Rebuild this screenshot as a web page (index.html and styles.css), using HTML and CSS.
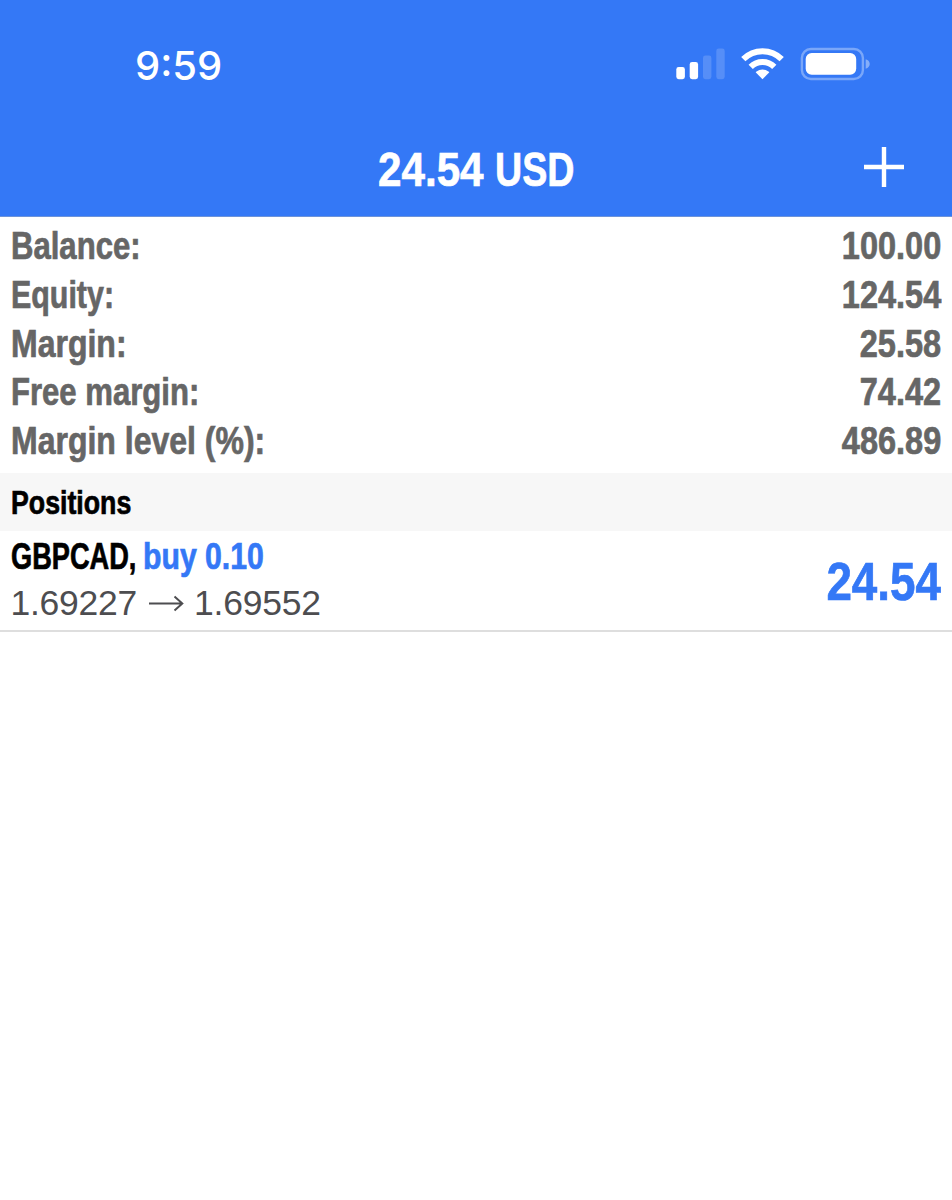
FILE: index.html
```
<!DOCTYPE html>
<html lang="en">
<head>
  <meta charset="UTF-8" />
  <meta name="viewport" content="width=device-width, initial-scale=1.0" />
  <title>24.54 USD</title>
  <link rel="stylesheet" href="styles.css">
</head>
<body>

<header>
  <div class="status-bar">
    <span class="time">9:59</span>
    <svg class="status-icons" width="196" height="34" viewBox="0 0 196 34" fill="#fff">
      <!-- signal -->
      <rect x="2.3" y="20" width="8.6" height="12.2" rx="2.4" />
      <rect x="15.7" y="15" width="8.4" height="17.2" rx="2.4" />
      <rect x="29" y="8.5" width="8.4" height="23.7" rx="2.4" opacity=".17" />
      <rect x="42.3" y="1.5" width="8.4" height="30.7" rx="2.4" opacity=".17" />
      <!-- wifi -->
      <g fill="none" stroke="#fff">
        <path d="M69.3 12.2A27.2 27.2 0 0 1 107.7 12.2" stroke-width="6" />
        <path d="M76.7 19.8A16.7 16.7 0 0 1 100.3 19.8" stroke-width="6" />
      </g>
      <path d="M88.5 32.3L81.9 25.6Q81.6 25.1 82.1 24.7Q88.5 20.1 94.9 24.7Q95.4 25.1 95.1 25.6Z" />
      <!-- battery -->
      <rect x="127.9" y="2" width="61" height="30" rx="9" fill="none" stroke="#fff" stroke-width="2.4" opacity=".35" />
      <rect x="131.7" y="6" width="50.5" height="21.8" rx="6" />
      <path d="M191.7 12.3Q195.7 13.6 195.7 17T191.7 21.7Z" opacity=".4" />
    </svg>
  </div>
  <div class="nav-bar">
    <h1><span class="amount">24.54</span> <span class="currency">USD</span></h1>
    <svg class="add" width="40" height="40" viewBox="0 0 40 40">
      <path d="M20 0V40M0 20H40" stroke="#fff" stroke-width="4.4" />
    </svg>
  </div>
</header>

<div class="summary">
  <div class="row"><span class="label">Balance:</span><span class="value">100.00</span></div>
  <div class="row"><span class="label equity">Equity:</span><span class="value">124.54</span></div>
  <div class="row"><span class="label margin">Margin:</span><span class="value">25.58</span></div>
  <div class="row"><span class="label">Free margin:</span><span class="value">74.42</span></div>
  <div class="row"><span class="label margin">Margin level (%):</span><span class="value">486.89</span></div>
</div>

<div class="section"><h2>Positions</h2></div>

<div class="position">
  <div class="details">
    <div class="order">
      <span class="symbol">GBPCAD,</span>
      <span class="side">buy 0.10</span>
    </div>
    <div class="prices">
      <span class="price">1.69227</span>
      <svg class="arrow" width="35" height="17" viewBox="0 0 35 17" fill="none" stroke="#4d4d50" stroke-width="2">
        <path d="M0 8.5H33M25.5 1.5L33.3 8.5L25.5 15.5" />
      </svg>
      <span class="price">1.69552</span>
    </div>
  </div>
  <span class="profit">24.54</span>
</div>

</body>
</html>
```

FILE: styles.css
```
* {
  box-sizing: border-box;
}

body {
  margin: 0;
  background: #fff;
  font-family: "Liberation Sans", Arial, sans-serif;
  color: #000;
}

header {
  height: 217px;
  background: #3478f6;
  color: #fff;
  border-bottom: 1px solid #6c93da;
}

.status-bar {
  display: flex;
  justify-content: space-between;
  padding: 42px 82px 0 135px;
  height: 119px;
}

.time {
  font-family: Inter, sans-serif;
  font-size: 40px;
  font-weight: 500;
  line-height: 48px;
}

.status-icons {
  margin-top: 5px;
}

.nav-bar {
  display: grid;
  grid-template-columns: 1fr auto 1fr;
  align-items: center;
  height: 96px;
  padding: 0 48px;
}

.nav-bar h1 {
  display: flex;
  justify-content: space-between;
  grid-column: 2;
  width: 196px;
  margin: 4px 0 0;
  font-size: 48.5px;
  line-height: 58px;
}

.add {
  justify-self: end;
}

/* condensed bold text */
.label, .value, .section h2, .symbol, .side, .profit, .amount, .currency {
  display: inline-block;
  font-weight: bold;
  white-space: nowrap;
  transform-origin: left;
  -webkit-text-stroke: .7px currentColor;
}

.amount {
  width: 104px;
  transform: scaleX(.87);
}

.currency {
  width: 79px;
  transform: scaleX(.775);
}

.summary {
  height: 256px;
  padding: 5px 11px 0 10.5px;
  color: #666;
}

.row {
  display: flex;
  justify-content: space-between;
  height: 48.75px;
  font-size: 38px;
  line-height: 48px;
}

.label {
  transform: scaleX(.818);
}

.label.equity {
  transform: scaleX(.8);
}

.label.margin {
  transform: scaleX(.842);
}

.value, .profit {
  transform: scaleX(.855);
  transform-origin: right;
}

.section {
  height: 58px;
  padding-left: 10.5px;
  background: #f7f7f7;
}

.section h2 {
  margin: 0;
  font-size: 33px;
  line-height: 59px;
  transform: scaleX(.81);
}

.position {
  display: flex;
  justify-content: space-between;
  height: 101px;
  padding: 0 11px 0 10.5px;
  border-bottom: 2px solid #dedede;
}

.order {
  display: flex;
  height: 49px;
  font-size: 36.5px;
  line-height: 52px;
}

.symbol {
  width: 132px;
  transform: scaleX(.745);
}

.side {
  color: #3478f6;
  transform: scaleX(.827);
}

.prices {
  display: flex;
  align-items: center;
  height: 46px;
  color: #4d4d50;
}

.price {
  font-size: 35.5px;
  line-height: 46px;
  letter-spacing: -.25px;
}

.arrow {
  margin: 0 10px 0 12px;
}

.profit {
  color: #3478f6;
  font-size: 53.5px;
  line-height: 102px;
}
```
